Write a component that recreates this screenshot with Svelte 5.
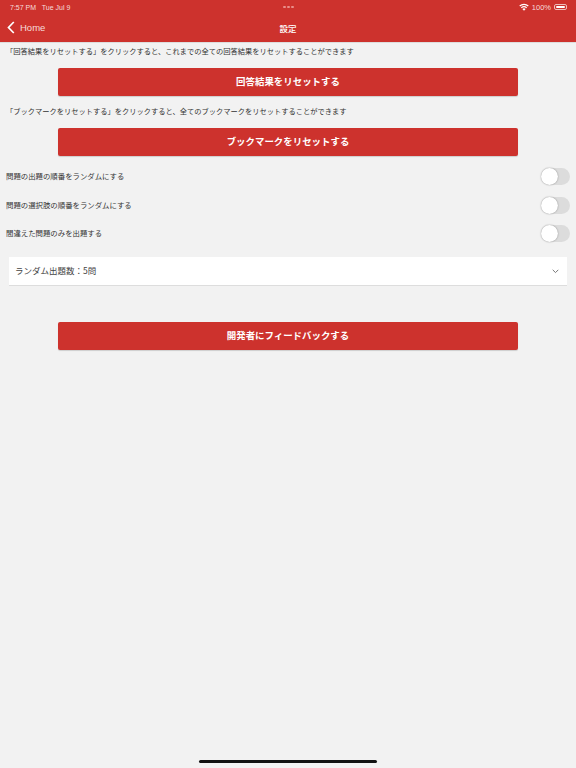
<script lang="ts">
	const toggles = ['問題の出題の順番をランダムにする', '問題の選択肢の順番をランダムにする', '間違えた問題のみを出題する'];
</script>

<div class="page">
	<header>
		<div class="status">
			<span class="time">7:57 PM&nbsp;&nbsp; Tue Jul 9</span>
			<span class="dots"><i></i><i></i><i></i></span>
			<span class="right">
				<svg class="wifi" width="10" height="8" viewBox="0 0 20 15">
					<path d="M10 15 L6.8 11.3 A5 5 0 0 1 13.2 11.3 Z" fill="#fff" />
					<path d="M4.6 9 A8.2 8.2 0 0 1 15.4 9" fill="none" stroke="#fff" stroke-width="2.4" />
					<path d="M1.4 5.4 A12.8 12.8 0 0 1 18.6 5.4" fill="none" stroke="#fff" stroke-width="2.4" />
				</svg>
				<span class="pct">100%</span>
				<span class="battery"><b></b></span>
			</span>
		</div>
		<nav>
			<span class="back">
				<svg width="8" height="13" viewBox="0 0 8 13"><path d="M6.8 1 L1.5 6.5 L6.8 12" fill="none" stroke="#fff" stroke-width="1.7" /></svg>
				Home
			</span>
			<span class="title">設定</span>
		</nav>
	</header>

	<main>
		<p class="note first">「回答結果をリセットする」をクリックすると、これまでの全ての回答結果をリセットすることができます</p>
		<button class="action">回答結果をリセットする</button>
		<p class="note">「ブックマークをリセットする」をクリックすると、全てのブックマークをリセットすることができます</p>
		<button class="action">ブックマークをリセットする</button>

		<div class="toggles">
			{#each toggles as label (label)}
				<div class="row">
					<span class="label">{label}</span>
					<span class="switch"><span class="knob"></span></span>
				</div>
			{/each}
		</div>

		<div class="select">
			<span class="label">ランダム出題数：5問</span>
			<svg width="7" height="5" viewBox="0 0 7 5"><path d="M0.7 0.8 L3.5 3.6 L6.3 0.8" fill="none" stroke="#777" stroke-width="1" /></svg>
		</div>

		<button class="action feedback">開発者にフィードバックする</button>
	</main>

	<div class="home-bar"></div>
</div>

<style>
	:global(body) {
		margin: 0;
		background: #f2f2f2;
	}

	.page {
		width: 576px;
		height: 768px;
		position: relative;
		overflow: hidden;
		background: #f2f2f2;
		font-family: "Noto Sans CJK JP", "Liberation Sans", sans-serif;
		color: #333;
	}

	header {
		background: #cd322d;
		color: #fff;
		height: 42px;
		box-shadow: 0 1px 0 #ddd;
	}

	.status {
		height: 14px;
		display: grid;
		grid-template-columns: 1fr auto 1fr;
		align-items: center;
		padding: 0 9px 0 10px;
		font-family: "Liberation Sans", sans-serif;
		font-size: 7px;
		color: #f6dcda;
	}

	.dots {
		display: flex;
		gap: 1.5px;
	}

	.dots i {
		width: 2.5px;
		height: 2.5px;
		border-radius: 50%;
		background: #e98f8a;
	}

	.right {
		display: flex;
		justify-content: flex-end;
		align-items: center;
		gap: 3px;
	}

	.pct {
		font-size: 7.5px;
	}

	.battery {
		width: 13px;
		height: 6px;
		padding: 1px;
		box-sizing: border-box;
		border: 0.5px solid #eebbb8;
		border-radius: 2px;
		display: flex;
	}

	.battery b {
		flex: 1;
		background: #fff;
		border-radius: 1px;
	}

	nav {
		height: 28px;
		position: relative;
		display: flex;
		align-items: center;
		justify-content: center;
	}

	.back {
		position: absolute;
		left: 7px;
		top: 7px;
		display: flex;
		align-items: center;
		gap: 5px;
		font-family: "Liberation Sans", sans-serif;
		font-size: 9.5px;
		color: #f6dcda;
	}

	.title {
		font-size: 8.5px;
		font-weight: 500;
		padding-bottom: 1px;
	}

	main {
		display: flex;
		flex-direction: column;
	}

	.note {
		margin: 0;
		padding-left: 6px;
		font-size: 7.25px;
		line-height: 11px;
		height: 12px;
		color: #333;
	}

	.first {
		margin-top: 4px;
	}

	.note + .action {
		margin-top: 10px;
	}

	.action {
		align-self: center;
		width: 460px;
		height: 28px;
		margin-bottom: 10px;
		padding: 0 0 2px;
		border: 0;
		border-radius: 2px;
		background: #cd322d;
		box-shadow: 0 1px 1px rgba(0, 0, 0, 0.15);
		color: #fff;
		font-family: inherit;
		font-size: 9.45px;
		font-weight: 700;
	}

	.toggles {
		margin-top: -4px;
		display: flex;
		flex-direction: column;
	}

	.row {
		height: 28.7px;
		display: flex;
		align-items: center;
		justify-content: space-between;
		padding: 0 6px;
		font-size: 7.4px;
	}

	.label {
		margin-top: -2px;
	}

	.switch {
		width: 29px;
		height: 17px;
		border-radius: 9px;
		background: #dcdcdc;
		position: relative;
	}

	.knob {
		position: absolute;
		left: 0;
		top: 0;
		width: 17px;
		height: 17px;
		border-radius: 50%;
		background: #fff;
		box-shadow: 0 0 1.5px rgba(0, 0, 0, 0.45);
	}

	.select {
		margin: 9px 9px 0;
		height: 28px;
		padding: 0 8px 0 6px;
		display: flex;
		align-items: center;
		justify-content: space-between;
		background: #fff;
		border-bottom: 1px solid #ddd;
		font-size: 8.5px;
		color: #444;
	}

	.feedback {
		margin-top: 36px;
	}

	.home-bar {
		position: absolute;
		left: 199px;
		bottom: 5px;
		width: 178px;
		height: 3px;
		border-radius: 2px;
		background: #111;
	}
</style>
